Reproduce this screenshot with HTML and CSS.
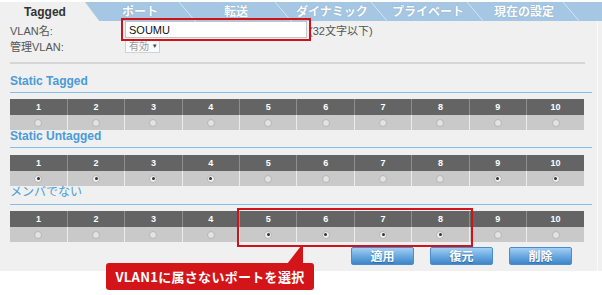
FILE: index.html
```html
<!DOCTYPE html>
<html lang="ja">
<head>
  <meta charset="UTF-8" />
  <title>VLAN設定</title>
  <link rel="stylesheet" href="styles.css">
</head>
<body>
  <div class="page">
    <div class="tabs">
      <div class="tab active">Tagged</div>
      <div class="tab">ポート</div>
      <div class="tab">転送</div>
      <div class="tab">ダイナミック</div>
      <div class="tab">プライベート</div>
      <div class="tab">現在の設定</div>
    </div>

    <div class="panel">
      <div class="form-row first">
        <label class="form-label" for="vlanName">VLAN名:</label>
        <input type="text" id="vlanName" class="name-input" value="SOUMU" />
        <span class="hint">(32文字以下)</span>
      </div>
      <div class="form-row">
        <span class="form-label">管理VLAN:</span>
        <span class="select">有効 <span class="caret">▼</span></span>
      </div>

      <div class="divider"></div>

      <h2 class="section-title first">Static Tagged</h2>
      <table class="ports" id="tagged"></table>

      <h2 class="section-title">Static Untagged</h2>
      <table class="ports" id="untagged"></table>

      <h2 class="section-title kana">メンバでない</h2>
      <table class="ports" id="nonmember"></table>

      <div class="actions">
        <button class="btn">適用</button>
        <button class="btn">復元</button>
        <button class="btn">削除</button>
      </div>
    </div>

    <!-- 注釈 -->
    <div class="mark mark-name"></div>
    <div class="mark mark-ports"></div>
    <div class="callout"><span class="callout-text">VLAN1に属さないポートを選択</span></div>
  </div>

  <script>
    // 各テーブルで選択されているポート
    const checked = {
      tagged: [],
      untagged: [1, 2, 3, 4, 9, 10],
      nonmember: [5, 6, 7, 8]
    };

    Object.keys(checked).forEach(id => {
      const table = document.getElementById(id);
      let head = '<tr>';
      let body = '<tr>';
      for (let i = 1; i <= 10; i++) {
        head += '<th>' + i + '</th>';
        const on = checked[id].includes(i) ? ' on' : '';
        body += '<td><span class="radio' + on + '"></span></td>';
      }
      table.innerHTML = head + '</tr>' + body + '</tr>';
    });
  </script>
</body>
</html>
```

FILE: styles.css
```css
body {
  margin: 0;
  background-color: #fff;
  font-family: "Liberation Sans", "Noto Sans CJK JP", sans-serif;
}
.page {
  position: relative;
  width: 602px;
  height: 293px;
  padding-top: 2px;
}
.tabs {
  display: flex;
  height: 20px;
  background-color: #a5c7e3;
}
.tab {
  position: relative;
  flex: 0 0 96px;
  text-align: center;
  line-height: 20px;
  font-size: 12px;
  font-weight: bold;
  color: #fff;
  text-shadow: 0 0 1px rgba(60, 90, 120, 0.4);
}
.tab::after {
  content: "";
  position: absolute;
  top: 0;
  right: -8px;
  width: 17px;
  height: 100%;
  background: linear-gradient(to top right, transparent calc(50% - 0.7px), #d6e6f3 50%, transparent calc(50% + 0.7px));
}
.tab.active {
  flex: 0 0 100px;
  margin-right: -8px;
  padding-right: 10px;
  box-sizing: border-box;
  background-color: #eff0ef;
  color: #333;
  text-shadow: none;
  clip-path: polygon(0 0, 85px 0, 100px 100%, 0 100%);
}
.tab.active::after {
  display: none;
}
.panel {
  height: 250px;
  padding: 0 10px;
  background: linear-gradient(to right, transparent 597px, #fafafa 597px, #fafafa 598px, transparent 598px) #eff0ef;
}
.form-row {
  display: flex;
  align-items: center;
  height: 14px;
  margin-top: 1px;
  font-size: 11px;
  color: #555;
}
.form-row.first {
  height: 17px;
  margin-top: -1px;
}
.form-label {
  width: 115px;
}
.name-input {
  width: 182px;
  height: 17px;
  box-sizing: border-box;
  padding: 0 3px;
  border: 1px solid #c4c4c4;
  background-color: #fff;
  font-family: "Liberation Sans", sans-serif;
  font-size: 11px;
  color: #111;
}
.hint {
  margin-left: 2px;
  color: #555;
}
.select {
  display: inline-block;
  width: 35px;
  height: 14px;
  box-sizing: border-box;
  padding-left: 3px;
  border: 1px solid #c9d4de;
  background-color: #fbfbfb;
  font-size: 10px;
  line-height: 12px;
  color: #999;
}
.caret {
  font-size: 6px;
  color: #444;
  vertical-align: 2px;
}
.divider {
  width: 575px;
  height: 2px;
  margin-top: 9px;
  background-color: #d6d6d6;
}
.section-title {
  margin: 0;
  padding-bottom: 5px;
  border-bottom: 1px solid #88bbe6;
  font-size: 12px;
  line-height: 12px;
  color: #4b9ad9;
}
.section-title.first {
  padding-top: 11px;
}
.section-title.kana {
  padding-bottom: 6px;
  font-weight: normal;
}
.ports {
  width: 574px;
  margin-top: 7px;
  border-collapse: collapse;
  table-layout: fixed;
}
.section-title.first + .ports,
.section-title.kana + .ports {
  margin-top: 6px;
}
.ports th {
  height: 16px;
  padding: 0;
  border-left: 1px solid #8e8e8e;
  background-color: #646464;
  color: #fff;
  font-size: 9px;
  font-weight: bold;
}
.ports td {
  height: 15px;
  padding: 0;
  border-left: 1px solid #ececec;
  background-color: #c9c9c9;
  text-align: center;
  line-height: 0;
}
.ports th:first-child,
.ports td:first-child {
  border-left: none;
}
.radio {
  display: inline-flex;
  align-items: center;
  justify-content: center;
  width: 8px;
  height: 8px;
  box-sizing: border-box;
  border: 1px solid #b5b5b5;
  border-radius: 50%;
  background-color: #e3e3e3;
}
.radio.on {
  background-color: #efefef;
}
.radio.on::after {
  content: "";
  width: 3px;
  height: 3px;
  border-radius: 50%;
  background-color: #333;
}
.actions {
  display: flex;
  justify-content: flex-end;
  gap: 16px;
  margin-top: 5px;
  padding-right: 20px;
}
.btn {
  width: 63px;
  height: 18px;
  padding: 0;
  border: 1px solid #4a8ccb;
  border-radius: 2px;
  background: linear-gradient(#a3cff2, #6aa9e0 50%, #3d86c9);
  color: #fff;
  font-family: "Noto Sans CJK JP", sans-serif;
  font-size: 12px;
  font-weight: bold;
  line-height: 16px;
  text-shadow: 0 1px 1px rgba(0, 40, 90, 0.4);
}
.mark {
  position: absolute;
  box-sizing: border-box;
  border: 2px solid #d0121a;
}
.mark-name {
  left: 121px;
  top: 18px;
  width: 190px;
  height: 23px;
}
.mark-ports {
  left: 237px;
  top: 208px;
  width: 236px;
  height: 39px;
}
.callout {
  position: absolute;
  left: 106px;
  top: 263px;
  width: 208px;
  height: 27px;
  display: flex;
  align-items: center;
  justify-content: center;
  border-radius: 3px;
  background-color: #d3151a;
}
.callout-text {
  color: #fff;
  font-family: "Noto Sans CJK JP", sans-serif;
  font-size: 13px;
  font-weight: bold;
  line-height: 16px;
  letter-spacing: 0.3px;
  white-space: nowrap;
}
.callout::before {
  content: "";
  position: absolute;
  left: 181px;
  top: -17px;
  width: 16px;
  height: 18px;
  background-color: #d3151a;
  clip-path: polygon(calc(100% - 2px) 0, 100% 0, 100% 100%, 0 100%);
}
```
